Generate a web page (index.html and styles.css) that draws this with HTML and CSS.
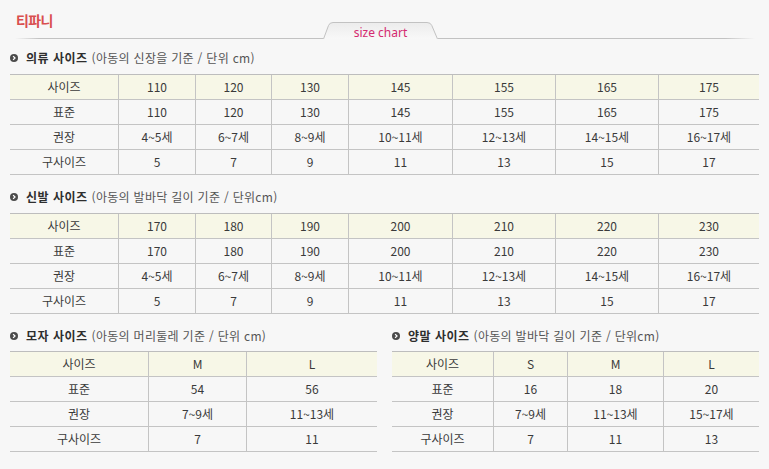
FILE: index.html
```html
<!DOCTYPE html>
<html lang="ko">
<head>
<meta charset="utf-8">
<title>티파니 size chart</title>
<link rel="stylesheet" href="styles.css">
</head>
<body>
<div class="page">
  <div class="top">
    <div class="top-left"><h1 class="brand">티파니</h1></div>
    <div class="tab">
      <svg class="tab-shape" width="115" height="17" viewBox="0 0 115 17">
        <defs>
          <linearGradient id="tg" x1="0" y1="0" x2="0" y2="1">
            <stop offset="0" stop-color="#ececec"/>
            <stop offset="1" stop-color="#f8f8f8"/>
          </linearGradient>
        </defs>
        <path d="M0.5 17 L5.5 3.5 Q6.6 0.5 10 0.5 L104 0.5 Q107.6 0.5 108.8 3.5 L114.5 17" fill="url(#tg)" stroke="#c2c2c2" stroke-width="1"/>
      </svg>
      <span class="tab-label">size chart</span>
    </div>
    <div class="top-right"></div>
  </div>

  <div class="section-title first">
    <svg class="bullet" width="8" height="8" viewBox="0 0 8 8"><circle cx="4" cy="4" r="4" fill="#4b4b4b"/><path d="M3.1 2.1 L5 4 L3.1 5.9" fill="none" stroke="#fff" stroke-width="1.3"/></svg>
    <b>의류 사이즈</b><span class="note">(아동의 신장을 기준 / 단위 cm)</span>
  </div>
  <div class="chart wide">
    <div class="row head"><div>사이즈</div><div>110</div><div>120</div><div>130</div><div>145</div><div>155</div><div>165</div><div>175</div></div>
    <div class="row"><div>표준</div><div>110</div><div>120</div><div>130</div><div>145</div><div>155</div><div>165</div><div>175</div></div>
    <div class="row"><div>권장</div><div>4~5세</div><div>6~7세</div><div>8~9세</div><div>10~11세</div><div>12~13세</div><div>14~15세</div><div>16~17세</div></div>
    <div class="row"><div>구사이즈</div><div>5</div><div>7</div><div>9</div><div>11</div><div>13</div><div>15</div><div>17</div></div>
  </div>

  <div class="section-title second">
    <svg class="bullet" width="8" height="8" viewBox="0 0 8 8"><circle cx="4" cy="4" r="4" fill="#4b4b4b"/><path d="M3.1 2.1 L5 4 L3.1 5.9" fill="none" stroke="#fff" stroke-width="1.3"/></svg>
    <b>신발 사이즈</b><span class="note">(아동의 발바닥 길이 기준 / 단위cm)</span>
  </div>
  <div class="chart wide">
    <div class="row head"><div>사이즈</div><div>170</div><div>180</div><div>190</div><div>200</div><div>210</div><div>220</div><div>230</div></div>
    <div class="row"><div>표준</div><div>170</div><div>180</div><div>190</div><div>200</div><div>210</div><div>220</div><div>230</div></div>
    <div class="row"><div>권장</div><div>4~5세</div><div>6~7세</div><div>8~9세</div><div>10~11세</div><div>12~13세</div><div>14~15세</div><div>16~17세</div></div>
    <div class="row"><div>구사이즈</div><div>5</div><div>7</div><div>9</div><div>11</div><div>13</div><div>15</div><div>17</div></div>
  </div>

  <div class="pair">
    <div class="col">
      <div class="section-title third">
        <svg class="bullet" width="8" height="8" viewBox="0 0 8 8"><circle cx="4" cy="4" r="4" fill="#4b4b4b"/><path d="M3.1 2.1 L5 4 L3.1 5.9" fill="none" stroke="#fff" stroke-width="1.3"/></svg>
        <b>모자 사이즈</b><span class="note">(아동의 머리둘레 기준 / 단위 cm)</span>
      </div>
      <div class="chart hat">
        <div class="row head"><div>사이즈</div><div>M</div><div>L</div></div>
        <div class="row"><div>표준</div><div>54</div><div>56</div></div>
        <div class="row"><div>권장</div><div>7~9세</div><div>11~13세</div></div>
        <div class="row"><div>구사이즈</div><div>7</div><div>11</div></div>
      </div>
    </div>
    <div class="col">
      <div class="section-title third">
        <svg class="bullet" width="8" height="8" viewBox="0 0 8 8"><circle cx="4" cy="4" r="4" fill="#4b4b4b"/><path d="M3.1 2.1 L5 4 L3.1 5.9" fill="none" stroke="#fff" stroke-width="1.3"/></svg>
        <b>양말 사이즈</b><span class="note">(아동의 발바닥 길이 기준 / 단위cm)</span>
      </div>
      <div class="chart sock">
        <div class="row head"><div>사이즈</div><div>S</div><div>M</div><div>L</div></div>
        <div class="row"><div>표준</div><div>16</div><div>18</div><div>20</div></div>
        <div class="row"><div>권장</div><div>7~9세</div><div>11~13세</div><div>15~17세</div></div>
        <div class="row"><div>구사이즈</div><div>7</div><div>11</div><div>13</div></div>
      </div>
    </div>
  </div>
</div>
</body>
</html>
```

FILE: styles.css
```css
* { box-sizing: border-box; }
html, body { margin: 0; padding: 0; }
body {
  background: #f7f7f7;
  font-family: "Noto Sans CJK KR", "Noto Sans", sans-serif;
  font-size: 12px;
  color: #3a3a3a;
}
.page { width: 769px; }

.top {
  display: flex;
  align-items: flex-end;
  height: 39px;
  padding: 0 14px 0 15px;
}
.top-left {
  flex: 0 0 308px;
  align-self: stretch;
  padding: 11px 0 0 1px;
  background-image: linear-gradient(to right, rgba(190,190,190,0), #c2c2c2 24px);
  background-repeat: no-repeat;
  background-size: 100% 1px;
  background-position: left bottom;
}
.brand {
  margin: 0;
  font-size: 14px;
  line-height: 18px;
  font-weight: 700;
  color: #d94f4f;
  letter-spacing: -0.6px;
}
.tab {
  flex: 0 0 115px;
  height: 17px;
  position: relative;
  text-align: center;
}
.tab-shape { position: absolute; left: 0; top: 0; }
.tab-label {
  position: relative;
  display: block;
  padding-top: 3px;
  font-family: "Noto Sans", sans-serif;
  font-size: 12px;
  line-height: 15px;
  color: #d42a70;
}
.top-right {
  flex: 1;
  align-self: stretch;
  background-image: linear-gradient(to right, #c2c2c2 calc(100% - 30px), rgba(190,190,190,0));
  background-repeat: no-repeat;
  background-size: 100% 1px;
  background-position: left bottom;
}

.section-title {
  display: flex;
  align-items: center;
  height: 16px;
  line-height: 16px;
  white-space: nowrap;
  color: #555;
}
.section-title b { color: #2e2e2e; font-weight: 700; margin-right: 4px; letter-spacing: 0.5px; }
.note { letter-spacing: 0.3px; }
.bullet { flex: 0 0 8px; margin-right: 8px; }
.section-title.first { margin: 11px 0 8px 10px; }
.section-title.second { margin: 14px 0 8px 10px; }
.section-title.third { margin: 14px 0 7px 0; }

.chart {
  border-top: 1px solid #bdbdbd;
}
.chart.wide { margin-left: 10px; width: 749px; }
.row {
  display: grid;
  height: 25px;
  border-bottom: 1px solid #c4c4c4;
}
.row > div {
  text-align: center;
  line-height: 24px;
  height: 24px;
  white-space: nowrap;
}
.row > div + div { border-left: 1px solid #c4c4c4; }
.row.head { background: #f7f7e7; }
.wide .row { grid-template-columns: 108px 77px 76px 77px 104px 103px 103px 101px; }
.hat .row { grid-template-columns: 138px 98px 131px; }
.sock .row { grid-template-columns: 101px 74px 96px 96px; }

.pair {
  display: grid;
  grid-template-columns: 367px 367px;
  column-gap: 15px;
  padding-left: 10px;
}
```
